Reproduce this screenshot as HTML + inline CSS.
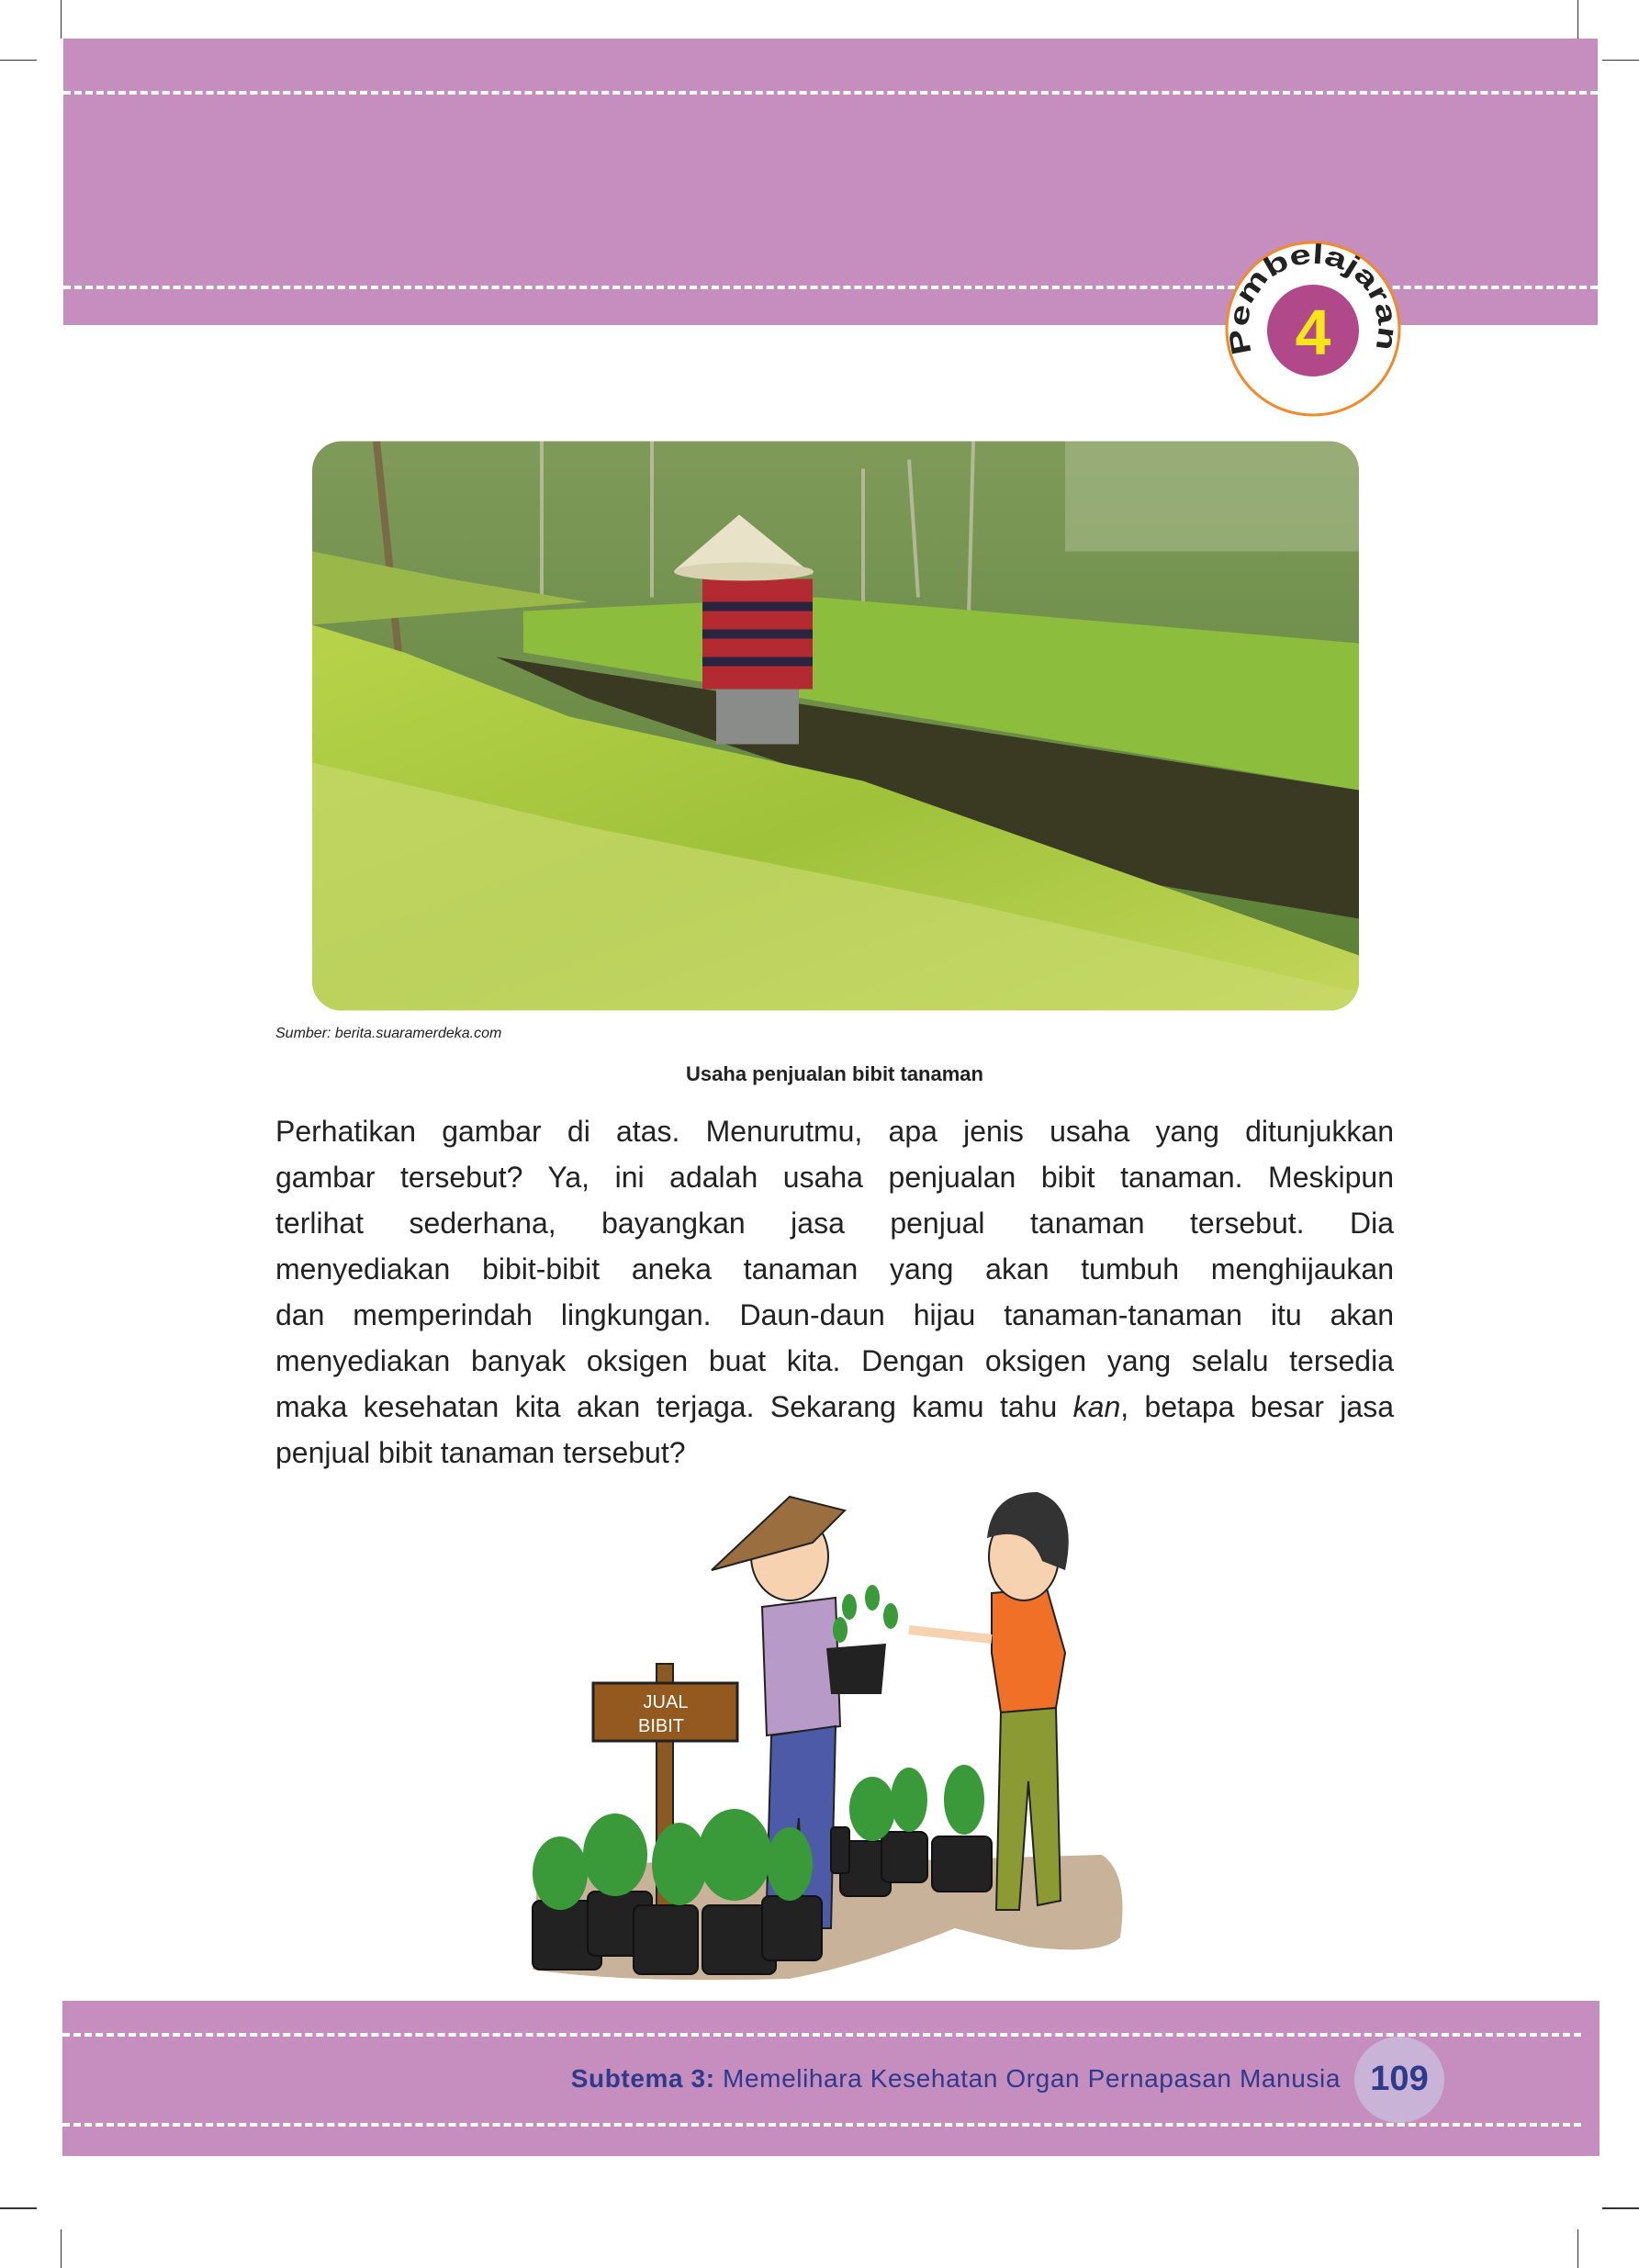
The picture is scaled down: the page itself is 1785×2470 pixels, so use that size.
<!DOCTYPE html>
<html><head><meta charset="utf-8"><style>
body{margin:0;background:#fff;}
.page{position:relative;width:1785px;height:2470px;overflow:hidden;background:#fff;font-family:"Liberation Sans",sans-serif;}
.band{position:absolute;background:#c68dbf;}
.dash{position:absolute;height:0;border-top:4px dashed #fff;}
.cm{position:absolute;background:#333;}
.txt{position:absolute;left:300px;top:1207px;width:1218px;margin:0;font-size:32px;line-height:50px;color:#222;}
.txt div{text-align:justify;text-align-last:justify;white-space:nowrap;}
.txt div.l{text-align-last:left;}
</style></head><body><div class="page">
<div class="cm" style="left:66px;top:0;width:1px;height:42px"></div>
<div class="cm" style="left:1718px;top:0;width:1px;height:42px"></div>
<div class="cm" style="left:0;top:65px;width:40px;height:1px"></div>
<div class="cm" style="left:1745px;top:65px;width:40px;height:1px"></div>
<div class="cm" style="left:0;top:2404px;width:40px;height:2px"></div>
<div class="cm" style="left:1745px;top:2404px;width:40px;height:2px"></div>
<div class="cm" style="left:66px;top:2428px;width:1px;height:42px"></div>
<div class="cm" style="left:1718px;top:2428px;width:1px;height:42px"></div>

<div class="band" style="left:69px;top:42px;width:1671px;height:312px"></div>
<div class="dash" style="left:69px;top:99px;width:1671px"></div>
<div class="dash" style="left:69px;top:311px;width:1671px"></div>

<svg style="position:absolute;left:1320px;top:250px" width="220" height="220" viewBox="-110 -108 220 220">
<circle cx="0" cy="0" r="94" fill="#fff" stroke="#f08a2a" stroke-width="3"/>
<circle cx="0" cy="2" r="50" fill="#b0488a"/>
<text x="0" y="28" text-anchor="middle" font-family="Liberation Sans" font-weight="bold" font-size="70" fill="#f6e51a">4</text>
<path id="arc" d="M -66 26 A 71 71 0 1 1 66 26" fill="none"/>
<text font-family="Liberation Sans" font-weight="bold" font-size="30" fill="#222"><textPath href="#arc" textLength="272" lengthAdjust="spacingAndGlyphs">Pembelajaran</textPath></text>
</svg>

<svg style="position:absolute;left:340px;top:480px" width="1140" height="621" viewBox="0 0 1140 620">
<defs><clipPath id="rc"><rect width="1140" height="620" rx="32"/></clipPath>
<linearGradient id="sky" x1="0" y1="0" x2="0" y2="1"><stop offset="0" stop-color="#7f9a5a"/><stop offset="1" stop-color="#5a7f34"/></linearGradient>
<linearGradient id="fr" x1="0" y1="0" x2="1" y2="1"><stop offset="0" stop-color="#b8d34a"/><stop offset=".5" stop-color="#9fc23a"/><stop offset="1" stop-color="#c4d65a"/></linearGradient></defs>
<g clip-path="url(#rc)">
<rect width="1140" height="620" fill="url(#sky)"/>
<rect x="820" y="0" width="320" height="120" fill="#a9b98a" opacity=".6"/>
<g stroke="#c8c8b0" stroke-width="4" opacity=".7"><line x1="250" y1="0" x2="250" y2="170"/><line x1="370" y1="0" x2="370" y2="170"/><line x1="600" y1="30" x2="600" y2="180"/><line x1="650" y1="20" x2="660" y2="170"/><line x1="720" y1="0" x2="715" y2="190"/></g>
<line x1="70" y1="0" x2="95" y2="240" stroke="#7a6a45" stroke-width="8"/>
<polygon points="0,120 150,150 300,175 0,200" fill="#9ab84a"/>
<polygon points="230,185 550,170 1140,220 1140,380 230,230" fill="#8cbd3c"/>
<polygon points="200,235 1140,380 1140,520 900,480 300,280" fill="#3a3a22"/>
<polygon points="0,200 100,230 280,300 600,370 1140,560 1140,620 0,620" fill="url(#fr)"/>
<polygon points="0,350 300,420 700,500 1140,600 1140,620 0,620" fill="#c7d86c" opacity=".7"/>
<rect x="425" y="150" width="120" height="120" fill="#b32a33"/>
<g fill="#2a2440"><rect x="425" y="175" width="120" height="10"/><rect x="425" y="205" width="120" height="10"/><rect x="425" y="235" width="120" height="10"/></g>
<rect x="440" y="270" width="90" height="60" fill="#8a8c8a"/>
<polygon points="465,80 395,140 545,145" fill="#e8e3c8"/>
<ellipse cx="470" cy="142" rx="76" ry="10" fill="#d8d2b0"/>
</g></svg>

<div style="position:absolute;left:300px;top:1117px;font-size:16px;font-style:italic;color:#222">Sumber: berita.suaramerdeka.com</div>
<div style="position:absolute;left:0;width:1818px;top:1157px;text-align:center;font-size:22px;font-weight:bold;color:#222">Usaha penjualan bibit tanaman</div>

<div class="txt">
<div>Perhatikan gambar di atas. Menurutmu, apa jenis usaha yang ditunjukkan</div>
<div>gambar tersebut? Ya, ini adalah usaha penjualan bibit tanaman. Meskipun</div>
<div>terlihat sederhana, bayangkan jasa penjual tanaman tersebut. Dia</div>
<div>menyediakan bibit-bibit aneka tanaman yang akan tumbuh menghijaukan</div>
<div>dan memperindah lingkungan. Daun-daun hijau tanaman-tanaman itu akan</div>
<div>menyediakan banyak oksigen buat kita. Dengan oksigen yang selalu tersedia</div>
<div>maka kesehatan kita akan terjaga. Sekarang kamu tahu <i>kan</i>, betapa besar jasa</div>
<div class="l">penjual bibit tanaman tersebut?</div>
</div>

<svg style="position:absolute;left:560px;top:1600px" width="700" height="560" viewBox="0 0 700 560">
<path d="M25,445 Q120,420 300,430 L640,420 Q670,440 660,510 Q640,530 560,520 L480,500 Q380,540 300,555 Q120,560 20,545 Z" fill="#c8b39a"/>
<rect x="155" y="212" width="18" height="270" fill="#8a5a22" stroke="#222" stroke-width="2"/>
<rect x="86" y="233" width="157" height="63" fill="#94591f" stroke="#222" stroke-width="3"/>
<text x="165" y="260" text-anchor="middle" font-family="Liberation Sans" font-size="20" fill="#fff">JUAL</text>
<text x="160" y="286" text-anchor="middle" font-family="Liberation Sans" font-size="20" fill="#fff">BIBIT</text>
<path d="M270,150 L350,140 L355,280 L275,290 Z" fill="#b89ac8" stroke="#222" stroke-width="2"/>
<path d="M280,290 L350,280 L345,500 L315,500 L310,380 L300,470 L275,470 Z" fill="#4d5aa8" stroke="#222" stroke-width="2"/>
<ellipse cx="300" cy="95" rx="42" ry="48" fill="#f6d2b0" stroke="#222" stroke-width="2"/>
<path d="M215,110 L300,30 L360,45 L325,80 Z" fill="#9a6e3e" stroke="#222" stroke-width="2"/>
<path d="M340,195 L405,190 L400,245 L345,245 Z" fill="#222"/>
<g fill="#3a9a3a"><ellipse cx="365" cy="150" rx="8" ry="14"/><ellipse cx="390" cy="140" rx="8" ry="14"/><ellipse cx="410" cy="160" rx="8" ry="14"/><ellipse cx="355" cy="175" rx="8" ry="14"/></g>
<path d="M520,135 L580,130 L600,200 L590,260 L530,265 L520,200 Z" fill="#f07028" stroke="#222" stroke-width="2"/>
<path d="M530,265 L590,260 L595,470 L570,475 L560,340 L550,480 L525,480 Z" fill="#8c9a34" stroke="#222" stroke-width="2"/>
<ellipse cx="555" cy="95" rx="38" ry="48" fill="#f6d2b0" stroke="#222" stroke-width="2"/>
<path d="M515,75 Q520,25 570,25 Q615,40 600,110 L575,100 Q560,60 515,75 Z" fill="#333"/>
<path d="M520,185 L430,175" stroke="#f6d2b0" stroke-width="10"/>
<g fill="#222" stroke="#111" stroke-width="2">
<rect x="20" y="470" width="75" height="75" rx="8"/><rect x="80" y="460" width="70" height="70" rx="8"/><rect x="130" y="475" width="70" height="75" rx="8"/><rect x="205" y="475" width="80" height="75" rx="8"/><rect x="270" y="465" width="65" height="70" rx="8"/>
<rect x="355" y="405" width="55" height="60" rx="8"/><rect x="400" y="395" width="50" height="55" rx="8"/><rect x="455" y="400" width="65" height="60" rx="8"/><rect x="345" y="390" width="20" height="50" rx="4"/>
</g>
<g fill="#3a9a3a">
<ellipse cx="50" cy="440" rx="30" ry="40"/><ellipse cx="110" cy="420" rx="35" ry="45"/><ellipse cx="180" cy="430" rx="30" ry="45"/><ellipse cx="240" cy="420" rx="40" ry="50"/><ellipse cx="300" cy="430" rx="25" ry="40"/><ellipse cx="390" cy="370" rx="25" ry="35"/><ellipse cx="430" cy="360" rx="20" ry="35"/><ellipse cx="490" cy="360" rx="22" ry="38"/>
</g>
</svg>

<div class="band" style="left:68px;top:2179px;width:1674px;height:169px"></div>
<div class="dash" style="left:68px;top:2214px;width:1654px"></div>
<div class="dash" style="left:68px;top:2312px;width:1654px"></div>
<div style="position:absolute;left:1475px;top:2218px;width:98px;height:94px;border-radius:50%;background:#c9b3d6"></div>
<div style="position:absolute;left:1475px;top:2243px;width:98px;text-align:center;font-size:38px;font-weight:bold;color:#2e3a8c">109</div>
<div style="position:absolute;right:325px;top:2248px;font-size:28px;letter-spacing:0.6px;color:#2e3a8c;white-space:nowrap"><b>Subtema 3:</b> Memelihara Kesehatan Organ Pernapasan Manusia</div>
</div></body></html>
